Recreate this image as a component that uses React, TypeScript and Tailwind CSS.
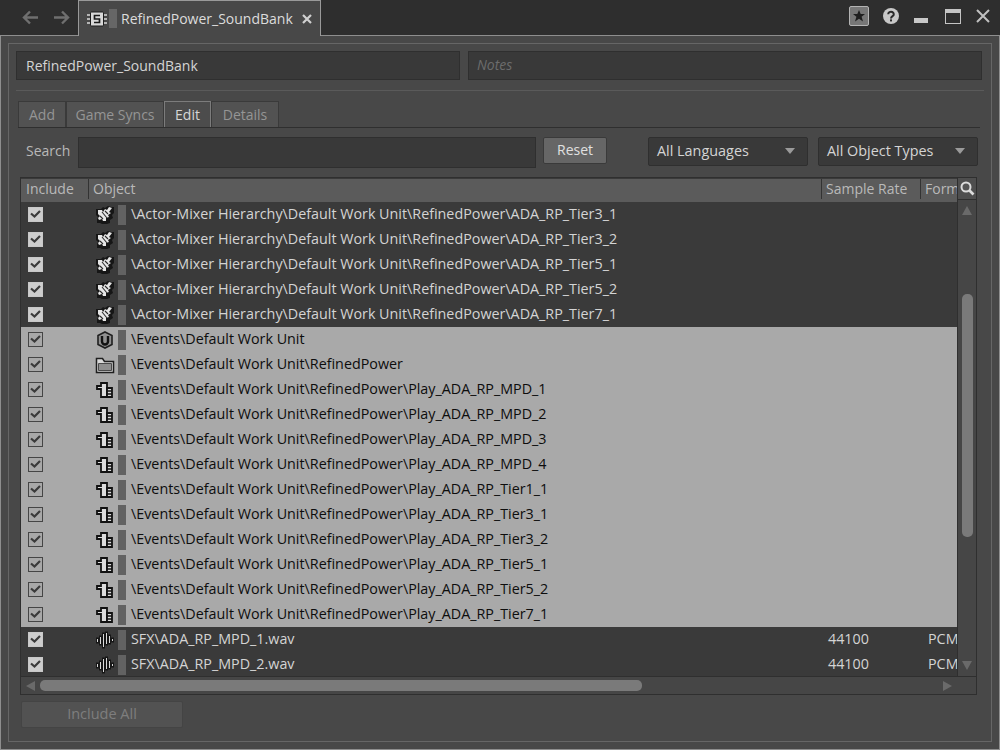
import type { ReactNode } from 'react';

type Kind = 'actor' | 'workunit' | 'folder' | 'event' | 'wave';

interface Row {
  kind: Kind;
  path: string;
  selected?: boolean;
  rate?: string;
  format?: string;
}

const actor = (name: string): Row => ({
  kind: 'actor',
  path: `\\Actor-Mixer Hierarchy\\Default Work Unit\\RefinedPower\\${name}`,
});
const event = (name: string): Row => ({
  kind: 'event',
  selected: true,
  path: `\\Events\\Default Work Unit\\RefinedPower\\${name}`,
});

const rows: Row[] = [
  actor('ADA_RP_Tier3_1'),
  actor('ADA_RP_Tier3_2'),
  actor('ADA_RP_Tier5_1'),
  actor('ADA_RP_Tier5_2'),
  actor('ADA_RP_Tier7_1'),
  { kind: 'workunit', selected: true, path: '\\Events\\Default Work Unit' },
  { kind: 'folder', selected: true, path: '\\Events\\Default Work Unit\\RefinedPower' },
  event('Play_ADA_RP_MPD_1'),
  event('Play_ADA_RP_MPD_2'),
  event('Play_ADA_RP_MPD_3'),
  event('Play_ADA_RP_MPD_4'),
  event('Play_ADA_RP_Tier1_1'),
  event('Play_ADA_RP_Tier3_1'),
  event('Play_ADA_RP_Tier3_2'),
  event('Play_ADA_RP_Tier5_1'),
  event('Play_ADA_RP_Tier5_2'),
  event('Play_ADA_RP_Tier7_1'),
  { kind: 'wave', path: 'SFX\\ADA_RP_MPD_1.wav', rate: '44100', format: 'PCM' },
  { kind: 'wave', path: 'SFX\\ADA_RP_MPD_2.wav', rate: '44100', format: 'PCM' },
];

function RowIcon({ kind }: { kind: Kind }) {
  if (kind === 'actor') {
    return (
      <svg width="18" height="18" viewBox="0 0 18 18">
        <path d="M0 3h5l2-2 2 1 3-2 3 1 3 0v6l-2 2 1 3-3 2v3l-3 1H6l-2-1H1v-4l1-2-2-2z" fill="#161616" />
        <path
          d="M2 4h4l1 2 2-3 2 1 2-3 3 1-3 4 2 1-3 2 1 2-3 1v3H7l-1-2-3 1-1-2 2-2-2-2z"
          fill="#e6e6e6"
        />
        <path d="M6 6l5 6M9 5l3 3M4 10l3 3" stroke="#2b2b2b" strokeWidth="1.1" />
      </svg>
    );
  }
  if (kind === 'workunit') {
    return (
      <svg width="18" height="18" viewBox="0 0 18 18">
        <path d="M9 1l7 3.5v9L9 17l-7-3.5v-9z" fill="#8f8f8f" stroke="#1f1f1f" strokeWidth="1.6" />
        <path d="M6 5v5.5a3 3 0 0 0 6 0V5" fill="none" stroke="#111" strokeWidth="2.4" />
      </svg>
    );
  }
  if (kind === 'folder') {
    return (
      <svg width="20" height="18" viewBox="0 0 20 18">
        <path d="M1.5 2.5h6l2 3h9v11h-17z" fill="#d8d8d8" stroke="#1f1f1f" strokeWidth="1.5" />
        <path d="M3.5 7.5h13v7h-13z" fill="#8f8f8f" stroke="#4a4a4a" strokeWidth="1" />
      </svg>
    );
  }
  if (kind === 'event') {
    return (
      <svg width="18" height="18" viewBox="0 0 18 18">
        <path d="M1 5h4V2h6v14H5V8H1z" fill="#dcdcdc" stroke="#111" strokeWidth="1.8" />
        <path d="M11 7h5v9h-5z" fill="#dcdcdc" stroke="#111" strokeWidth="1.8" />
        <path d="M11 10h5M11 13h5" stroke="#111" strokeWidth="1.4" />
      </svg>
    );
  }
  return (
    <svg width="18" height="18" viewBox="0 0 18 18">
      <path
        d="M1.5 8v3M4.5 6v7M7.5 3v13M10.5 2v11M13.5 5v7M16.5 8v2"
        stroke="#161616"
        strokeWidth="3"
        strokeLinecap="square"
      />
      <path d="M1.5 8v3M4.5 6v7M7.5 3v13M10.5 2v11M13.5 5v7M16.5 8v2" stroke="#d8d8d8" strokeWidth="1" />
    </svg>
  );
}

function CheckBox({ selected }: { selected?: boolean }) {
  return (
    <div
      className={`flex h-[15px] w-[15px] items-center justify-center ${
        selected ? 'border-[1.5px] border-[#454545] bg-[#a8a8a8]' : 'border border-[#c8c8c8] bg-[#cdcdcd]'
      }`}
    >
      <svg width="11" height="9" viewBox="0 0 11 9">
        <path d="M1 3.5l3.5 3L10 1" fill="none" stroke="#3a3a3a" strokeWidth="2.2" />
      </svg>
    </div>
  );
}

function TableRow({ row }: { row: Row }) {
  return (
    <div
      className={`flex h-[25px] items-center text-[14.32px] ${
        row.selected ? 'bg-[#a9a9a9] text-[#0d0d0d]' : 'text-[#d4d4d4]'
      }`}
    >
      <div className="flex w-[68px] pl-[7px]">
        <CheckBox selected={row.selected} />
      </div>
      <div className="flex w-[28px] shrink-0 justify-center pl-[3px]">
        <RowIcon kind={row.kind} />
      </div>
      <div className="ml-[1px] h-[20px] w-[8px] shrink-0 bg-[#626262]" />
      <div className="ml-[5px] w-[697px] shrink-0 whitespace-nowrap">{row.path}</div>
      <div className="w-[100px] shrink-0">{row.rate}</div>
      <div className="w-[29px] shrink-0 overflow-hidden">{row.format}</div>
    </div>
  );
}

function Dropdown({ label }: { label: string }) {
  return (
    <div className="flex h-[29px] w-[160px] items-center justify-between rounded-[2px] border border-[#2f2f2f] bg-[#393939] pb-[1px] pl-[8px] pr-[11px] text-[14.4px] text-[#d4d4d4]">
      <span>{label}</span>
      <svg width="12" height="6" viewBox="0 0 12 6">
        <path d="M1 0h10L6 6z" fill="#9a9a9a" />
      </svg>
    </div>
  );
}

function Tab({ children, active, width }: { children: ReactNode; active?: boolean; width: string }) {
  return (
    <div
      className={`flex h-[26px] items-center justify-center border border-b-0 ${width} ${
        active
          ? 'border-[#7c7c7c] bg-[#4c4c4c] text-[#d6d6d6]'
          : 'border-[#3a3a3a] bg-[#525252] text-[#959595]'
      }`}
    >
      {children}
    </div>
  );
}

function Arrow({ flip }: { flip?: boolean }) {
  return (
    <svg width="17" height="15" viewBox="0 0 17 15" className={flip ? 'rotate-180' : ''}>
      <path d="M8 1.5L2 7.5l6 6M2.5 7.5H16" fill="none" stroke="#6f6f6f" strokeWidth="2.4" />
    </svg>
  );
}

export default function App() {
  return (
    <div
      className="flex h-[750px] w-[1000px] flex-col overflow-hidden bg-[#2e2e2e] text-[14px] leading-none"
      style={{ fontFamily: '"Open Sans", "Noto Sans", sans-serif' }}
    >
      {/* title bar */}
      <div className="relative z-10 flex h-[36px] shrink-0 items-start">
        <div className="flex w-[78px] items-center gap-[14px] pl-[22px] pt-[10px]">
          <Arrow />
          <Arrow flip />
        </div>
        <div className="flex h-[36px] w-[243px] items-center border-x border-t border-[#9a9a9a] bg-[#484848] pl-[8px] text-[#dcdcdc]">
          <svg width="20" height="16" viewBox="0 0 20 16">
            <path d="M0 4h20M0 8h20M0 12h20" stroke="#d8d8d8" strokeWidth="1.5" />
            <rect x="3.5" y="1" width="13" height="14" rx="1" fill="#d8d8d8" stroke="#1c1c1c" />
            <path d="M13 4.5H7.5v3.5h5v3.5H7" fill="none" stroke="#1c1c1c" strokeWidth="1.7" />
          </svg>
          <div className="ml-[2px] h-[19px] w-[8px] bg-[#666666]" />
          <span className="ml-[4px] whitespace-nowrap">RefinedPower_SoundBank</span>
          <svg width="10" height="10" viewBox="0 0 10 10" className="ml-[9px]">
            <path d="M1 1l8 8M9 1l-8 8" stroke="#d0d0d0" strokeWidth="2.2" />
          </svg>
        </div>
        <div className="ml-auto flex items-center pt-[6px]">
          <div className="flex h-[20px] w-[20px] items-center justify-center rounded-[2px] border border-[#b4b4b4] bg-[#777777]">
            <svg width="12" height="12" viewBox="0 0 12 12">
              <path d="M6 0l1.7 4H12L8.6 6.8 10 11.5 6 8.8 2 11.5l1.4-4.7L0 4h4.3z" fill="#1f1f1f" />
            </svg>
          </div>
          <svg width="16" height="16" viewBox="0 0 16 16" className="ml-[14px]">
            <circle cx="8" cy="8" r="8" fill="#c8c8c8" />
            <path d="M5.2 6.2a2.8 2.4 0 1 1 4.4 1.9C8.6 8.8 8 9.2 8 10.4" fill="none" stroke="#2a2a2a" strokeWidth="2" />
            <rect x="7" y="11.4" width="2" height="2" fill="#2a2a2a" />
          </svg>
          <div className="ml-[15px] mt-[9px] h-[5px] w-[14px] bg-[#c8c8c8]" />
          <div className="ml-[17px] h-[15px] w-[16px] border border-[#c4c4c4] border-t-[4px]" />
          <svg width="14" height="14" viewBox="0 0 14 14" className="ml-[15px] mr-[10px]">
            <path d="M1 1l12 12M13 1L1 13" stroke="#c0c0c0" strokeWidth="2" />
          </svg>
        </div>
      </div>

      {/* document frame */}
      <div className="-mt-px flex-1 border border-[#8e8e8e] bg-[#484848] p-[7px]">
        <div className="flex h-full flex-col border border-[#666666] px-[7px] pt-[7px]">
          <div className="flex gap-[8px]">
            <div className="flex h-[29px] w-[444px] items-center border border-[#2f2f2f] bg-[#393939] pl-[9px] pt-[1px] text-[#d4d4d4]">
              RefinedPower_SoundBank
            </div>
            <div className="flex h-[29px] w-[514px] items-center border border-[#2f2f2f] bg-[#393939] pb-[2px] pl-[8px] italic text-[#6c6c6c]">
              Notes
            </div>
          </div>
          <div className="mt-[10px] h-px w-full bg-[#5a5a5a]" />

          <div className="ml-[2px] mt-[10px] flex">
            <Tab width="w-[48px]">Add</Tab>
            <Tab width="w-[98px]">Game Syncs</Tab>
            <Tab active width="w-[47px]">
              Edit
            </Tab>
            <Tab width="w-[68px]">Details</Tab>
          </div>
          <div className="ml-[2px] h-px w-[962px] bg-[#2f2f2f]" />

          <div className="mt-[9px] flex items-start">
            <span className="ml-[10px] w-[52px] pt-[7px] text-[#b8b8b8]">Search</span>
            <div className="h-[31px] w-[458px] border border-[#2f2f2f] bg-[#393939]" />
            <div className="ml-[7px] flex h-[27px] w-[64px] items-center justify-center rounded-[2px] border border-[#3a3a3a] bg-[#666666] pb-[2px] text-[#e0e0e0]">
              Reset
            </div>
            <div className="ml-[41px]">
              <Dropdown label="All Languages" />
            </div>
            <div className="ml-[10px]">
              <Dropdown label="All Object Types" />
            </div>
          </div>

          {/* object table */}
          <div className="ml-[4px] mt-[9px] flex h-[518px] w-[957px] flex-col border border-[#2f2f2f] bg-[#3a3a3a]">
            <div className="flex min-h-0 flex-1">
              <div className="flex w-[936px] flex-col">
                <div className="mt-px flex h-[23px] shrink-0 items-center bg-[#5b5b5b] pb-[3px] text-[#b9b9b9]">
                  <div className="flex h-full w-[68px] items-center border-r border-[#333333] pl-[5px]">Include</div>
                  <div className="flex h-full w-[733px] items-center border-r border-[#333333] pl-[4px]">Object</div>
                  <div className="flex h-full w-[99px] items-center border-r border-[#333333] pl-[4px]">Sample Rate</div>
                  <div className="flex h-full flex-1 items-center overflow-hidden pl-[4px]">Format</div>
                </div>
                <div className="overflow-hidden">
                  {rows.map((row) => (
                    <TableRow key={row.path} row={row} />
                  ))}
                </div>
              </div>
              <div className="flex w-[19px] flex-col border-l border-[#2f2f2f] bg-[#464646]">
                <div className="flex h-[22px] items-center justify-center border-b border-[#2f2f2f] bg-[#4e4e4e]">
                  <svg width="15" height="15" viewBox="0 0 15 15">
                    <circle cx="6" cy="6" r="4.5" fill="#555" stroke="#dcdcdc" strokeWidth="2" />
                    <path d="M9.5 9.5l4 4" stroke="#dcdcdc" strokeWidth="2.6" />
                  </svg>
                </div>
                <div className="mt-[6px] flex justify-center">
                  <svg width="10" height="9" viewBox="0 0 10 9">
                    <path d="M5 0l5 9H0z" fill="#6a6a6a" />
                  </svg>
                </div>
                <div className="ml-[4px] mt-[79px] h-[243px] w-[11px] rounded-[5px] bg-[#7a7a7a]" />
                <div className="mt-auto mb-[6px] flex justify-center">
                  <svg width="10" height="9" viewBox="0 0 10 9">
                    <path d="M5 9l5-9H0z" fill="#6a6a6a" />
                  </svg>
                </div>
              </div>
            </div>
            <div className="flex h-[18px] shrink-0 items-center border-t border-[#2f2f2f] bg-[#464646]">
              <svg width="9" height="10" viewBox="0 0 9 10" className="ml-[5px]">
                <path d="M0 5l9-5v10z" fill="#6a6a6a" />
              </svg>
              <div className="ml-[5px] h-[11px] w-[602px] rounded-[5px] bg-[#7a7a7a]" />
              <svg width="9" height="10" viewBox="0 0 9 10" className="ml-[301px]">
                <path d="M9 5L0 0v10z" fill="#6a6a6a" />
              </svg>
            </div>
          </div>

          <div className="ml-[5px] mt-[6px] flex h-[27px] w-[162px] items-center justify-center rounded-[2px] border border-[#444444] bg-[#525252] pb-[1px] text-[14.5px] text-[#7e7e7e]">
            Include All
          </div>
        </div>
      </div>
    </div>
  );
}
